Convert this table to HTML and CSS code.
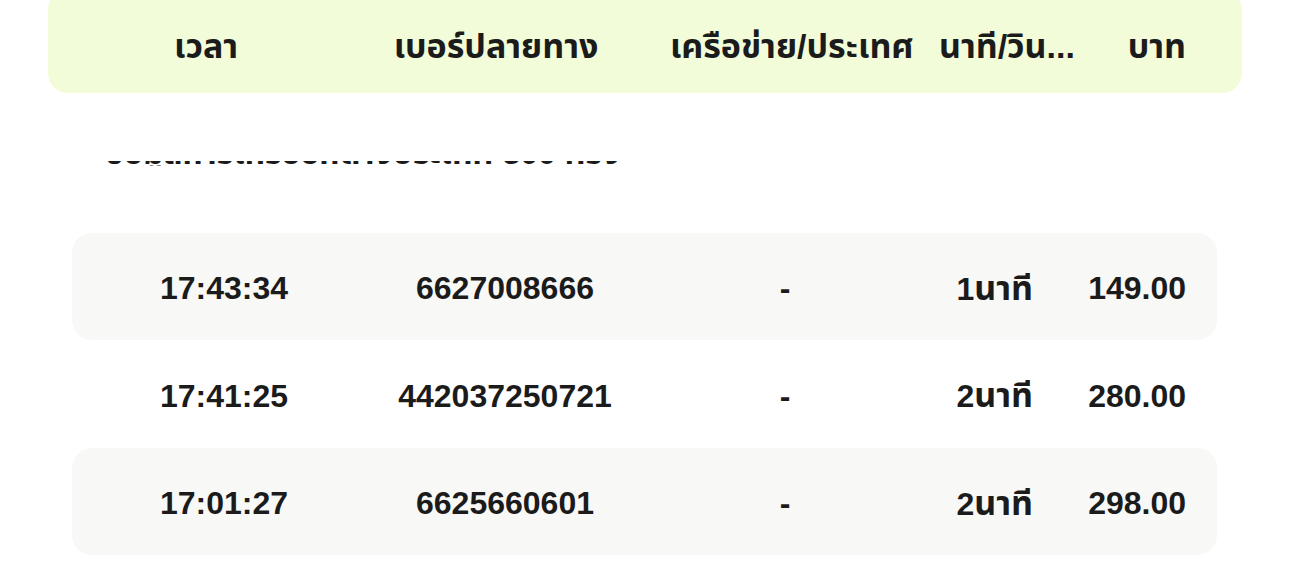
FILE: index.html
```html
<!DOCTYPE html>
<html lang="th">
<head>
<meta charset="utf-8">
<title>รายการโทร</title>
<link rel="stylesheet" href="styles.css">
</head>
<body>
<div class="page">
  <div class="head">
    <div class="h h1">เวลา</div>
    <div class="h h2">เบอร์ปลายทาง</div>
    <div class="h h3">เครือข่าย/ประเทศ</div>
    <div class="h h4">นาที/วิน...</div>
    <div class="h h5">บาท</div>
  </div>
  <div class="clip">
    <div class="clip-text">ข้อมูลการโทรออกต่างประเทศ 300 ครั้ง</div>
  </div>
  <div class="rows">
    <div class="row shade">
      <div class="c c1">17:43:34</div>
      <div class="c c2">6627008666</div>
      <div class="c c3">-</div>
      <div class="c c4">1<span class="th">นาที</span></div>
      <div class="c c5">149.00</div>
    </div>
    <div class="row">
      <div class="c c1">17:41:25</div>
      <div class="c c2">442037250721</div>
      <div class="c c3">-</div>
      <div class="c c4">2<span class="th">นาที</span></div>
      <div class="c c5">280.00</div>
    </div>
    <div class="row shade">
      <div class="c c1">17:01:27</div>
      <div class="c c2">6625660601</div>
      <div class="c c3">-</div>
      <div class="c c4">2<span class="th">นาที</span></div>
      <div class="c c5">298.00</div>
    </div>
  </div>
</div>
</body>
</html>
```
FILE: styles.css
```css
html, body {
  margin: 0;
  padding: 0;
  background: #ffffff;
}
body {
  font-family: "Liberation Sans", "Noto Sans Thai", "Noto Sans Thai Looped", "Noto Sans", sans-serif;
  font-weight: 700;
  font-size: 32px;
  color: #1b1b1b;
  overflow: hidden;
}
.page {
  width: 1290px;
  height: 562px;
  overflow: hidden;
  padding-top: 1px;
  box-sizing: border-box;
}
.head {
  margin: -11px 48px 0 48px;
  height: 103px;
  box-sizing: border-box;
  padding: 8px 56px 0 58px;
  background: #f2fcd9;
  border-radius: 20px;
  display: grid;
  grid-template-columns: 200px 364px 243px 171px 102px;
  align-items: center;
  font-size: 34px;
}
.h {
  white-space: nowrap;
  line-height: 40px;
}
.h1 { text-align: center; }
.h2 { text-align: center; padding-left: 16px; }
.h3 { text-align: center; }
.h4 {
  padding-left: 26px;
  overflow: hidden;
}
.h5 { text-align: right; }

.clip {
  margin: 68px 0 0 105px;
  height: 5px;
  overflow: hidden;
}
.clip-text {
  white-space: nowrap;
  line-height: 40px;
  margin-top: -28px;
}

.rows {
  margin: 66.5px 73px 0 72px;
}
.row {
  height: 107.5px;
  box-sizing: border-box;
  padding-top: 4px;
  border-radius: 20px;
  display: grid;
  grid-template-columns: 304px 258px 302px 97px 153px;
  align-items: center;
}
.row.shade {
  background: #f8f8f6;
}
.c {
  white-space: nowrap;
  line-height: 40px;
}
.c1, .c2, .c3 { text-align: center; }
.c4, .c5 { text-align: right; }
.th { font-size: 34px; }
```
